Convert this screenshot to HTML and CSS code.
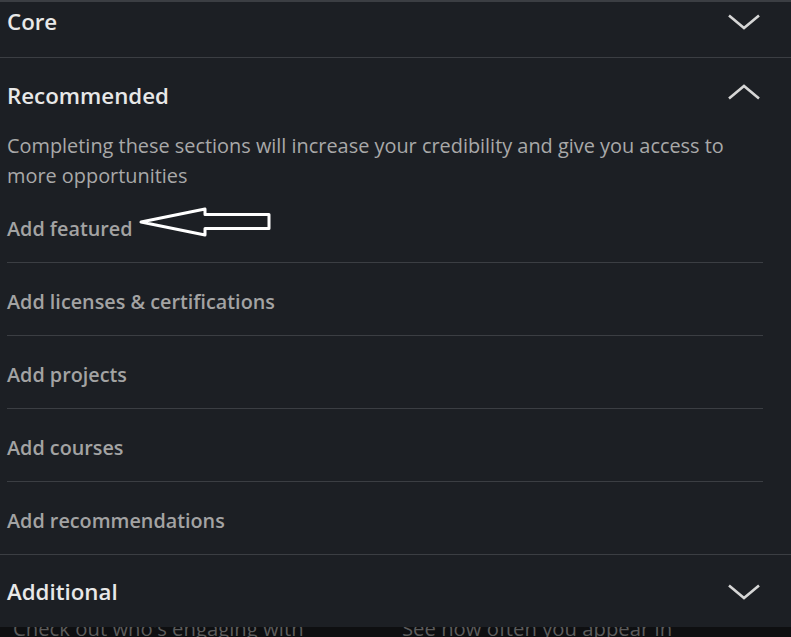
FILE: index.html
```html
<!DOCTYPE html>
<html lang="en">

<head>
    <meta charset="utf-8">
    <meta name="viewport" content="width=device-width, initial-scale=1.0">
    <title>Add profile section</title>
    <link rel="stylesheet" href="styles.css">
</head>

<body>
    <div id="panel">

        <!-- Core -->
        <div class="section section-core">
            <div class="section-head">
                <span class="section-title">Core</span>
                <svg class="chevron" width="32" height="16" viewBox="0 0 32 16">
                    <polyline points="1,1.5 16,14 31,1.5"></polyline>
                </svg>
            </div>
        </div>

        <!-- Recommended -->
        <div class="section section-rec">
            <div class="section-head">
                <span class="section-title">Recommended</span>
                <svg class="chevron chevron-up" width="32" height="16" viewBox="0 0 32 16">
                    <polyline points="1,14.5 16,2 31,14.5"></polyline>
                </svg>
            </div>
            <p class="section-desc">Completing these sections will increase your credibility and give you access to more opportunities</p>
            <ul class="item-list">
                <li class="item item-first">Add featured</li>
                <li class="item">Add licenses &amp; certifications</li>
                <li class="item">Add projects</li>
                <li class="item">Add courses</li>
                <li class="item">Add recommendations</li>
            </ul>
        </div>

        <!-- Additional -->
        <div class="section section-last">
            <div class="section-head">
                <span class="section-title">Additional</span>
                <svg class="chevron" width="32" height="16" viewBox="0 0 32 16">
                    <polyline points="1,1.5 16,14 31,1.5"></polyline>
                </svg>
            </div>
        </div>
    </div>

    <!-- page behind the dialog -->
    <div id="behind">
        <span class="behind-col">Check out who's engaging with</span>
        <span class="behind-col behind-col2">See how often you appear in</span>
    </div>

    <!-- hand-drawn arrow on the screenshot -->
    <svg class="note-arrow" width="791" height="637" viewBox="0 0 791 637">
        <polygon points="141,222 205,209 205,214.5 269,214.5 269,228.5 205,228.5 205,235"></polygon>
    </svg>
</body>

</html>
```

FILE: styles.css
```css
/* basic page */
body {
    margin: 0;
    background-color: #1c1f24;
    font-family: "Open Sans", "Noto Sans", sans-serif;
    overflow: hidden;
    height: 637px;
}

#panel {
    background-color: #1c1f24;
    border-top: 2px solid #3b3e43;
    height: 625px;
}

/* sections */
.section {
    border-bottom: 1px solid #3b3e43;
}

.section-last {
    border-bottom: none;
}

.section-head {
    display: flex;
    justify-content: space-between;
    align-items: center;
    padding: 22px 31px 20px 7px;
    height: 30px;
}

.section-core .section-head {
    padding-top: 5px;
    padding-bottom: 20px;
}

.section-rec .section-head {
    padding-top: 23px;
    padding-bottom: 19px;
}

.section-title {
    color: #e8e8e8;
    font-size: 22.3px;
    font-weight: 600;
    line-height: 30px;
}

.chevron polyline {
    fill: none;
    stroke: #d6d6d6;
    stroke-width: 2.6;
}

.chevron-up {
    margin-bottom: 9px;
}

.section-desc {
    margin: 1px 40px 0 7px;
    color: #a9a9a9;
    font-size: 19.9px;
    line-height: 30px;
}

/* list of items */
.item-list {
    list-style: none;
    margin: 0 28px 0 7px;
    padding: 0;
}

.item {
    color: #a3a3a3;
    font-size: 19.8px;
    font-weight: 600;
    line-height: 30px;
    padding: 24px 0 18px 0;
    border-bottom: 1px solid #3b3e43;
}

.item-first {
    padding-top: 23px;
}

.item:last-child {
    border-bottom: none;
}

/* the page under the dialog */
#behind {
    height: 12px;
    background-color: #0e0f11;
    overflow: hidden;
    display: flex;
}

.behind-col {
    display: block;
    width: 390px;
    padding-left: 13px;
    margin-top: -10px;
    color: #5c5c5c;
    font-size: 20.3px;
    line-height: 22px;
    white-space: nowrap;
}

.behind-col2 {
    padding-left: 0;
}

/* annotation arrow */
.note-arrow {
    position: absolute;
    left: 0;
    top: 0;
    pointer-events: none;
}

.note-arrow polygon {
    fill: none;
    stroke: #ffffff;
    stroke-width: 3;
    stroke-linejoin: round;
}
```
